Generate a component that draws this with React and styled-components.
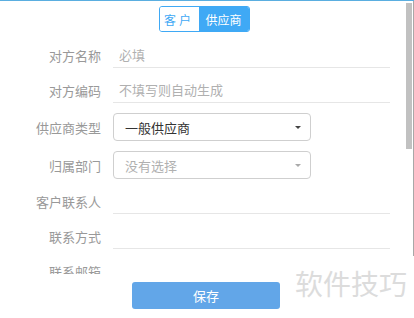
import React from 'react';
import styled, { createGlobalStyle } from 'styled-components';

const GlobalStyle = createGlobalStyle`
  html, body {
    margin: 0;
    padding: 0;
    background: #fff;
  }
  body {
    font-family: "Liberation Sans", "Noto Sans CJK SC", sans-serif;
  }
`;

const Frame = styled.div`
  position: relative;
  width: 414px;
  height: 318px;
  display: flex;
  flex-direction: column;
  border-top: 1px solid #5aaee0;
  box-sizing: border-box;
  overflow: hidden;
  background: #fff;
`;

const Body = styled.div`
  display: flex;
  height: 273px;
  overflow: hidden;
`;

const Form = styled.div`
  flex: 1;
  display: flex;
  flex-direction: column;
  gap: 10px;
  padding-top: 5px;
`;

const ToggleWrap = styled.div`
  display: flex;
  justify-content: center;
  margin-bottom: 1px;
  padding-left: 2px;
`;

const Toggle = styled.div`
  display: flex;
  height: 26px;
  border: 1px solid #3fa9f5;
  border-radius: 3px;
  box-sizing: border-box;
  overflow: hidden;
`;

const ToggleItem = styled.span`
  display: flex;
  align-items: center;
  justify-content: center;
  width: ${(p) => p.$w}px;
  font-size: 12px;
  letter-spacing: ${(p) => (p.$spaced ? '3px' : '0')};
  color: ${(p) => (p.$active ? '#fff' : '#3fa9f5')};
  background: ${(p) => (p.$active ? '#3fa9f5' : '#fff')};
`;

const Row = styled.div`
  display: grid;
  grid-template-columns: 101px 277px;
  column-gap: 12px;
  align-items: center;
`;

const Label = styled.label`
  text-align: right;
  font-size: 13px;
  color: #999;
  white-space: nowrap;
`;

const TextInput = styled.input`
  height: 25px;
  box-sizing: border-box;
  border: none;
  border-bottom: 1px solid #e6e6e6;
  padding: 0 6px;
  font-family: inherit;
  font-size: 13px;
  color: #333;
  outline: none;
  background: transparent;
  &::placeholder {
    color: #b0b0b0;
  }
`;

const Select = styled.div`
  width: 198px;
  height: 28px;
  box-sizing: border-box;
  border: 1px solid #cfcfcf;
  border-radius: 4px;
  display: flex;
  align-items: center;
  justify-content: space-between;
  padding: 0 9px 0 11px;
  font-size: 13px;
  color: ${(p) => (p.$empty ? '#b0b0b0' : '#333')};
`;

const Caret = styled.span`
  width: 0;
  height: 0;
  border-left: 3px solid transparent;
  border-right: 3px solid transparent;
  border-top: 3px solid ${(p) => (p.$empty ? '#aaa' : '#444')};
`;

const Scrollbar = styled.div`
  width: 7px;
  display: flex;
  flex-direction: column;
`;

const Thumb = styled.div`
  margin-top: 2px;
  height: 146px;
  width: 6px;
  background: #c1c1c1;
`;

const Edge = styled.div`
  width: 1px;
  height: 255px;
  background: #a8a8a8;
`;

const Footer = styled.div`
  flex: 1;
  display: flex;
  justify-content: center;
  align-items: flex-start;
  padding-top: 8px;
  padding-right: 2px;
  background: #fff;
`;

const SaveButton = styled.button`
  width: 148px;
  height: 27px;
  border: none;
  border-radius: 3px;
  background: #62a6e8;
  color: #fff;
  font-family: inherit;
  font-size: 13px;
  cursor: pointer;
`;

const Watermark = styled.div`
  position: absolute;
  left: 295px;
  top: 268px;
  font-size: 28px;
  line-height: 1.2;
  color: #dcdcdc;
  white-space: nowrap;
  pointer-events: none;
`;

const textRows = [
  { label: '对方名称', placeholder: '必填' },
  { label: '对方编码', placeholder: '不填写则自动生成' },
];

const selectRows = [
  { label: '供应商类型', value: '一般供应商', empty: false },
  { label: '归属部门', value: '没有选择', empty: true },
];

const contactRows = ['客户联系人', '联系方式', '联系邮箱'];

const App = () => (
  <>
    <GlobalStyle />
    <Frame>
      <Body>
        <Form>
          <ToggleWrap>
            <Toggle>
              <ToggleItem $w={39} $spaced>客户</ToggleItem>
              <ToggleItem $w={50} $active>供应商</ToggleItem>
            </Toggle>
          </ToggleWrap>
          {textRows.map((r) => (
            <Row key={r.label}>
              <Label>{r.label}</Label>
              <TextInput placeholder={r.placeholder} />
            </Row>
          ))}
          {selectRows.map((r) => (
            <Row key={r.label}>
              <Label>{r.label}</Label>
              <Select $empty={r.empty}>
                <span>{r.value}</span>
                <Caret $empty={r.empty} />
              </Select>
            </Row>
          ))}
          {contactRows.map((l) => (
            <Row key={l}>
              <Label>{l}</Label>
              <TextInput />
            </Row>
          ))}
        </Form>
        <Scrollbar>
          <Thumb />
        </Scrollbar>
        <Edge />
      </Body>
      <Footer>
        <SaveButton>保存</SaveButton>
      </Footer>
      <Watermark>软件技巧</Watermark>
    </Frame>
  </>
);

export default App;
